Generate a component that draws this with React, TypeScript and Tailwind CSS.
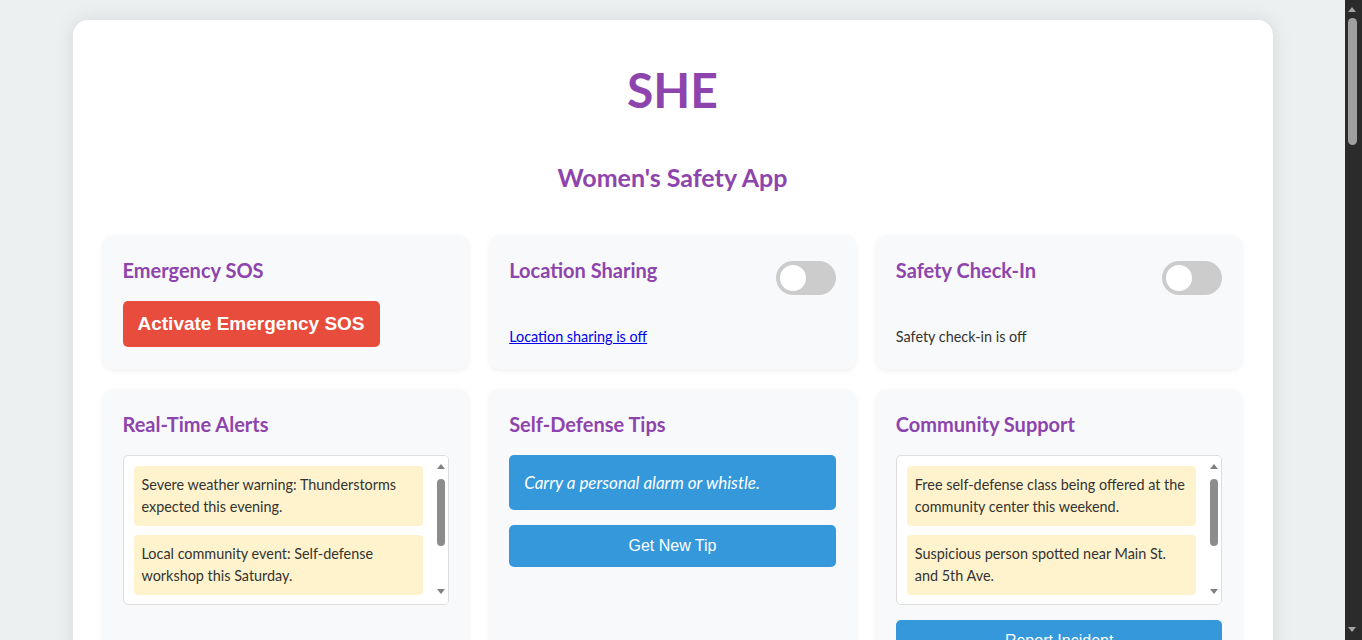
import React, { useState } from "react";

const sans = "font-['Segoe_UI','Lato','Open_Sans',sans-serif]";
const arial = "font-['Liberation_Sans',Arial,sans-serif]";

const Card = ({ children }: { children: React.ReactNode }) => (
  <div className="rounded-[10px] bg-[#f8f9fa] px-5 pt-5 pb-[22px] shadow-[0_2px_5px_rgba(0,0,0,0.06)]">{children}</div>
);

const Heading = ({ children }: { children: React.ReactNode }) => (
  <h3 className="mb-[15px] text-[20px] leading-[31px] font-bold text-[#8e44ad]">{children}</h3>
);

const Toggle = ({ on, onClick }: { on: boolean; onClick: () => void }) => (
  <button
    onClick={onClick}
    className={`mt-[6px] flex h-[34px] w-[60px] shrink-0 items-center rounded-full px-[4px] transition-colors ${
      on ? "justify-end bg-[#8e44ad]" : "justify-start bg-[#ccc]"
    }`}
  >
    <span className="block size-[26px] rounded-full bg-white" />
  </button>
);

// light scrollbar drawn beside the feed lists
const BoxScrollbar = () => (
  <div className="flex w-[15px] shrink-0 flex-col items-center bg-white">
    <span className="mt-[8px] h-0 w-0 border-x-[4px] border-b-[5px] border-x-transparent border-b-[#808080]" />
    <span className="mt-[10px] h-[67px] w-[8px] rounded-full bg-[#8c8c8c]" />
    <span className="flex-1" />
    <span className="mb-[10px] h-0 w-0 border-x-[4px] border-t-[5px] border-x-transparent border-t-[#808080]" />
  </div>
);

const FeedBox = ({ items }: { items: string[] }) => (
  <div className="flex h-[150px] overflow-hidden rounded-[5px] border border-[#ddd] bg-white">
    <div className="flex-1 overflow-y-auto p-[10px] [scrollbar-width:none]">
      {items.map((t) => (
        <div key={t} className="mb-[9px] rounded-[4px] bg-[#fff3cd] p-[8px] text-[14.4px] leading-[22px] text-[#333]">
          {t}
        </div>
      ))}
    </div>
    <BoxScrollbar />
  </div>
);

const BlueButton = ({ children, onClick }: { children: React.ReactNode; onClick?: () => void }) => (
  <button
    onClick={onClick}
    className={`mt-[15px] h-[42px] w-full rounded-[5px] bg-[#3498db] text-[16px] text-white ${arial}`}
  >
    {children}
  </button>
);

const Field = ({ placeholder }: { placeholder: string }) => (
  <input
    placeholder={placeholder}
    className="mb-[10px] h-[38px] w-full rounded-[5px] border border-[#ddd] bg-white px-[10px] text-[14px]"
  />
);

const tips = [
  "Carry a personal alarm or whistle.",
  "Trust your instincts and leave if something feels wrong.",
  "Share your location with a trusted friend.",
  "Stay in well-lit, populated areas at night.",
];

const App = () => {
  const [locationOn, setLocationOn] = useState(false);
  const [checkInOn, setCheckInOn] = useState(false);
  const [tip, setTip] = useState(0);

  return (
    <div className={`flex h-screen bg-[#ecf0f1] ${sans}`}>
      <main className="flex-1 overflow-y-auto [scrollbar-width:none]">
        <div className="pt-[20px] pb-[20px]">
          <div className="mx-auto max-w-[1200px] rounded-[15px] bg-white px-[30px] pt-[30px] pb-[30px] shadow-[0_0_20px_rgba(0,0,0,0.1)]">
            {/* header */}
            <h1 className="mt-[8px] text-center text-[48px] leading-[64px] font-bold text-[#8e44ad]">SHE</h1>
            <h2 className="mt-[39px] text-center text-[25px] leading-[32px] font-bold text-[#8e44ad]">Women's Safety App</h2>

            <div className="mt-[42px] grid grid-cols-3 gap-5">
              {/* row 1 */}
              <Card>
                <Heading>Emergency SOS</Heading>
                <button className={`h-[46px] rounded-[5px] bg-[#e74c3c] px-[15px] text-[19px] font-bold text-white ${arial}`}>
                  Activate Emergency SOS
                </button>
              </Card>

              <Card>
                <div className="flex items-start justify-between">
                  <Heading>Location Sharing</Heading>
                  <Toggle on={locationOn} onClick={() => setLocationOn(!locationOn)} />
                </div>
                <p className="mt-[26px] text-[14.4px] leading-[20px]">
                  <a href="#" className="text-[#0000ee] underline">
                    {locationOn ? "Location sharing is on" : "Location sharing is off"}
                  </a>
                </p>
              </Card>

              <Card>
                <div className="flex items-start justify-between">
                  <Heading>Safety Check-In</Heading>
                  <Toggle on={checkInOn} onClick={() => setCheckInOn(!checkInOn)} />
                </div>
                <p className="mt-[26px] text-[14.4px] leading-[20px] text-[#333]">
                  {checkInOn ? "Safety check-in is on" : "Safety check-in is off"}
                </p>
              </Card>

              {/* row 2 */}
              <Card>
                <Heading>Real-Time Alerts</Heading>
                <FeedBox
                  items={[
                    "Severe weather warning: Thunderstorms expected this evening.",
                    "Local community event: Self-defense workshop this Saturday.",
                    "Road closure on Elm Street due to construction until Friday.",
                  ]}
                />
              </Card>

              <Card>
                <Heading>Self-Defense Tips</Heading>
                <div className="rounded-[5px] bg-[#3498db] p-[15px] text-[17px] leading-[25px] text-white italic">{tips[tip]}</div>
                <BlueButton onClick={() => setTip((tip + 1) % tips.length)}>Get New Tip</BlueButton>
              </Card>

              <Card>
                <Heading>Community Support</Heading>
                <FeedBox
                  items={[
                    "Free self-defense class being offered at the community center this weekend.",
                    "Suspicious person spotted near Main St. and 5th Ave.",
                    "Walking group forming for evening commutes downtown.",
                  ]}
                />
                <BlueButton>Report Incident</BlueButton>
              </Card>

              {/* row 3 */}
              <Card>
                <Heading>Emergency Contacts</Heading>
                <Field placeholder="Contact name" />
                <Field placeholder="Phone number" />
                <BlueButton>Add Contact</BlueButton>
                <ul className="mt-[15px] text-[14px] leading-[22px] text-[#333]">
                  <li className="border-b border-[#eee] py-[8px]">Mom - (555) 123-4567</li>
                  <li className="border-b border-[#eee] py-[8px]">Sarah - (555) 987-6543</li>
                </ul>
              </Card>

              <Card>
                <Heading>Safe Route Planner</Heading>
                <Field placeholder="Starting point" />
                <Field placeholder="Destination" />
                <BlueButton>Find Safe Route</BlueButton>
                <div className="mt-[15px] flex h-[300px] items-center justify-center rounded-[5px] bg-[#e0e6ea] text-[14px] text-[#7f8c8d]">
                  Map will appear here
                </div>
              </Card>

              <Card>
                <Heading>Fake Call</Heading>
                <p className="text-[14px] leading-[22px] text-[#333]">
                  Schedule a fake incoming call to help you leave an uncomfortable situation.
                </p>
                <select className="mt-[15px] h-[38px] w-full rounded-[5px] border border-[#ddd] bg-white px-[10px] text-[14px]">
                  <option>In 30 seconds</option>
                  <option>In 1 minute</option>
                  <option>In 5 minutes</option>
                </select>
                <BlueButton>Schedule Fake Call</BlueButton>
              </Card>

              {/* row 4 */}
              <Card>
                <Heading>Safety Resources</Heading>
                <ul className="text-[14px] leading-[30px]">
                  <li><a href="#" className="text-[#0000ee] underline">National Domestic Violence Hotline</a></li>
                  <li><a href="#" className="text-[#0000ee] underline">Sexual Assault Support Line</a></li>
                  <li><a href="#" className="text-[#0000ee] underline">Women's Legal Aid</a></li>
                  <li><a href="#" className="text-[#0000ee] underline">Mental Health Helpline</a></li>
                  <li><a href="#" className="text-[#0000ee] underline">Local Police Non-Emergency</a></li>
                </ul>
              </Card>

              <Card>
                <Heading>Nearby Safe Places</Heading>
                <FeedBox
                  items={[
                    "City Police Station - 0.4 mi",
                    "St. Mary's Hospital - 0.9 mi",
                    "24/7 Pharmacy on Oak Ave - 1.1 mi",
                    "Central Fire Station - 1.3 mi",
                  ]}
                />
                <BlueButton>Refresh Places</BlueButton>
              </Card>

              <Card>
                <Heading>Voice Recording</Heading>
                <p className="text-[14px] leading-[22px] text-[#333]">Record audio evidence discreetly. Recordings are saved securely.</p>
                <button className={`mt-[15px] h-[46px] w-full rounded-[5px] bg-[#e74c3c] text-[17px] font-bold text-white ${arial}`}>
                  Start Recording
                </button>
              </Card>

              {/* row 5 */}
              <Card>
                <Heading>Safety Timer</Heading>
                <p className="text-[14px] leading-[22px] text-[#333]">Contacts are alerted if you don't check in before the timer ends.</p>
                <div className="mt-[15px] text-center text-[40px] leading-[56px] font-bold text-[#2c3e50]">00:00</div>
                <BlueButton>Start Timer</BlueButton>
              </Card>

              <Card>
                <Heading>Health &amp; Wellness</Heading>
                <FeedBox
                  items={[
                    "Remember to stay hydrated throughout the day.",
                    "Take a short walk to clear your mind.",
                    "Reach out to a friend if you feel stressed.",
                  ]}
                />
              </Card>

              <Card>
                <Heading>Feedback</Heading>
                <textarea
                  placeholder="Share your thoughts..."
                  className="h-[150px] w-full resize-none rounded-[5px] border border-[#ddd] bg-white p-[10px] text-[14px]"
                />
                <BlueButton>Submit Feedback</BlueButton>
              </Card>

              {/* incident map, full width */}
              <div className="col-span-3">
                <Card>
                  <Heading>Incident Map</Heading>
                  <div className="flex h-[480px] items-center justify-center rounded-[5px] bg-[#e0e6ea] text-[14px] text-[#7f8c8d]">
                    Reported incidents near you will be shown here
                  </div>
                </Card>
              </div>
            </div>

            {/* footer */}
            <div className="mt-[40px] border-t border-[#eee] pt-[20px] pb-[120px] text-center text-[14px] text-[#7f8c8d]">
              © 2024 SHE - Women's Safety App. Stay safe.
            </div>
          </div>
        </div>
      </main>

      {/* page scrollbar */}
      <div className="flex w-[17px] shrink-0 flex-col items-center bg-[#2b2b2b] pr-[3px]">
        <span className="mt-[7px] h-0 w-0 border-x-[4.5px] border-b-[5px] border-x-transparent border-b-[#a3a3a3]" />
        <span className="mt-[6px] h-[127px] w-[9px] rounded-full bg-[#9f9f9f]" />
        <span className="flex-1" />
        <span className="mb-[8px] h-0 w-0 border-x-[4.5px] border-t-[5px] border-x-transparent border-t-[#a3a3a3]" />
      </div>
    </div>
  );
};

export default App;
